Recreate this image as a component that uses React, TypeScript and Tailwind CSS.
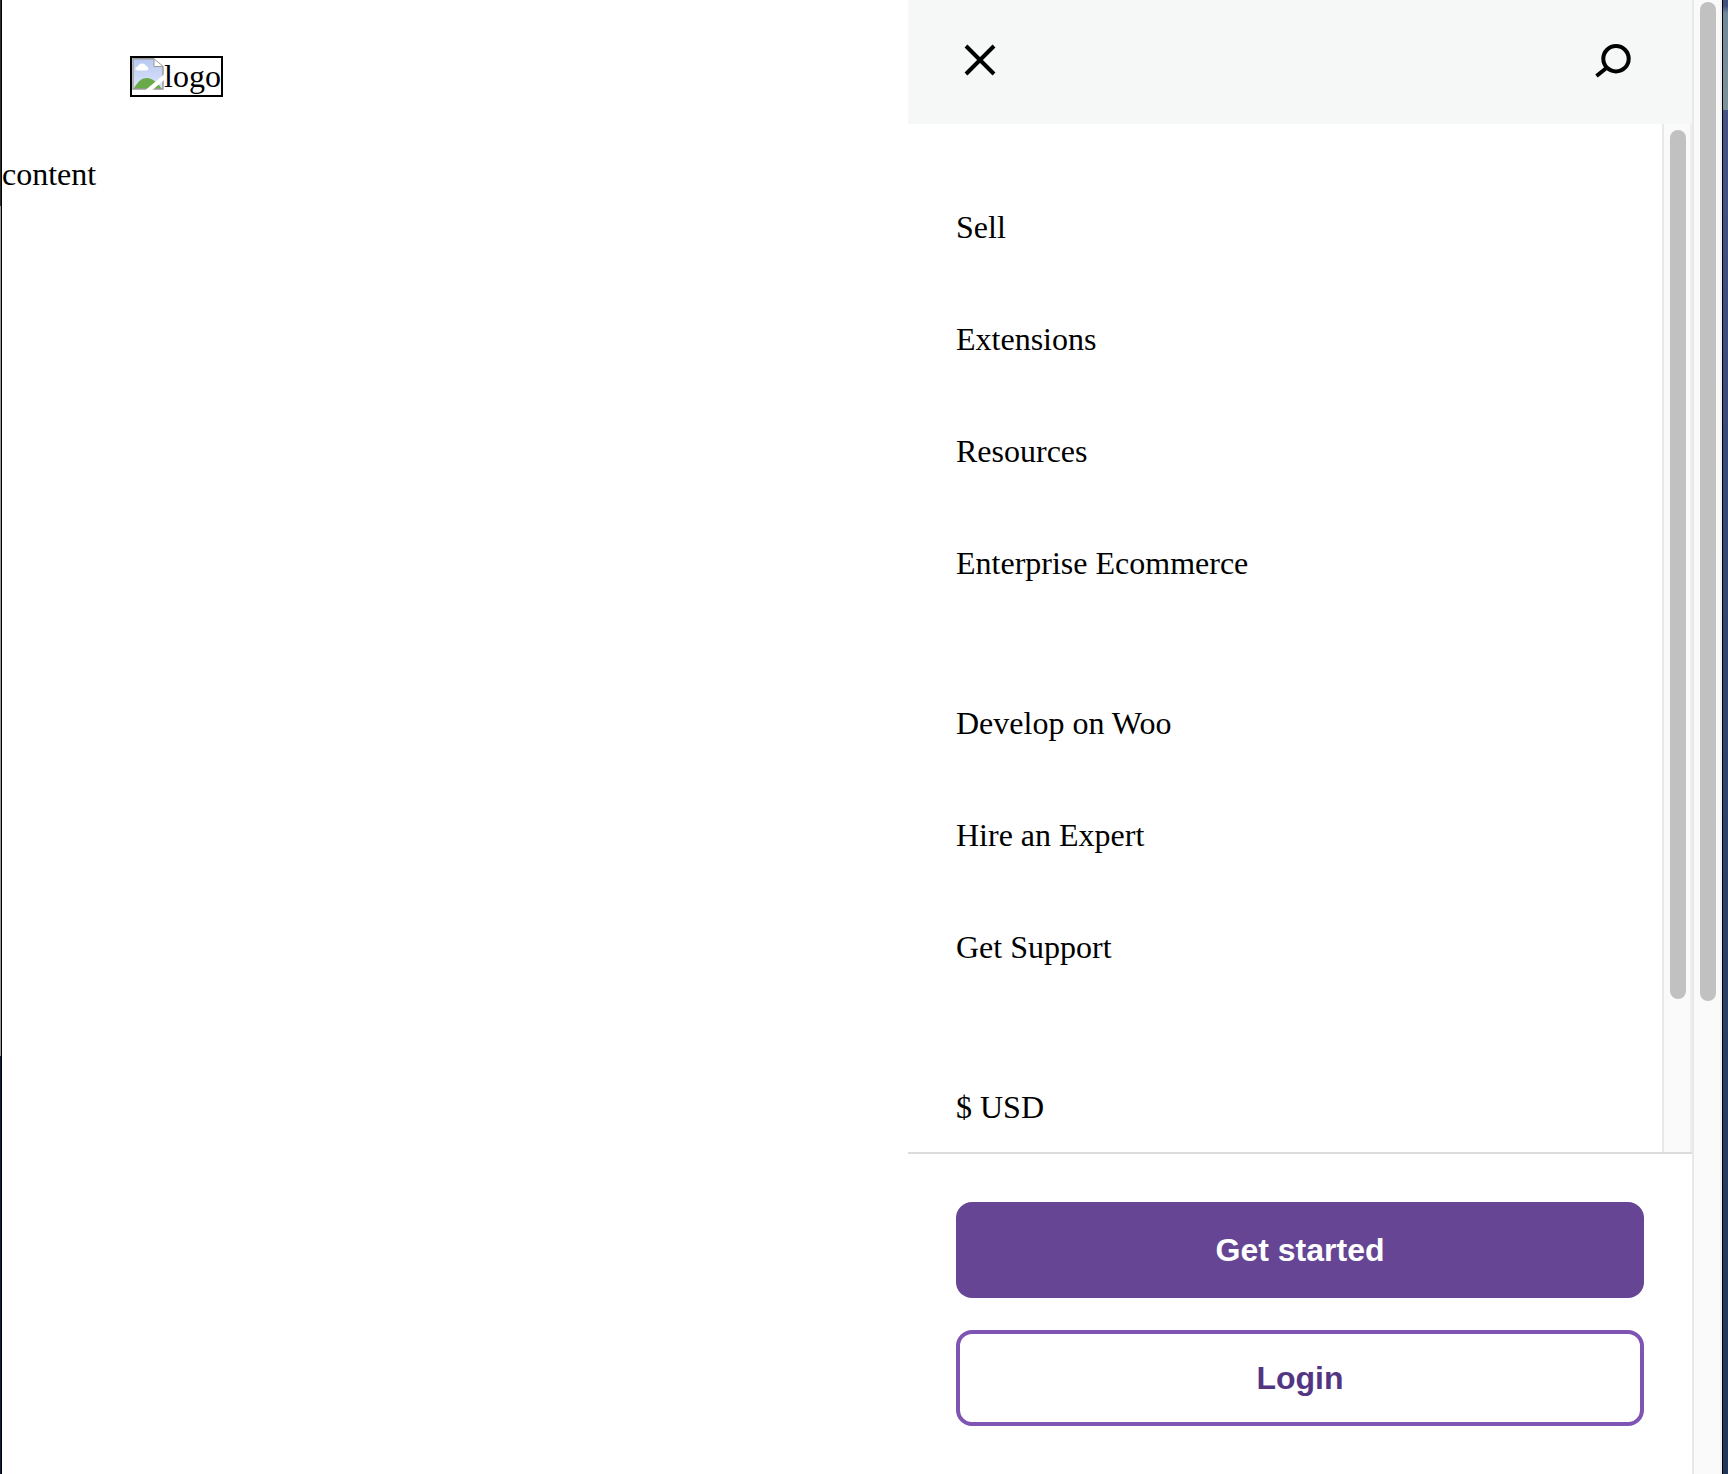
const groups = [
  ["Sell", "Extensions", "Resources", "Enterprise Ecommerce"],
  ["Develop on Woo", "Hire an Expert", "Get Support"],
  ["$ USD"],
];

function BrokenImage() {
  return (
    <svg className="size-8 shrink-0" viewBox="0 0 32 32">
      <defs>
        <linearGradient id="sky" x1="0" y1="0" x2="0" y2="1">
          <stop offset="0" stopColor="#b9c9f1" />
          <stop offset="1" stopColor="#dbe4f9" />
        </linearGradient>
      </defs>
      <path d="M1 1H22L31 9V31H1Z" fill="url(#sky)" />
      <path d="M1.500 31C6 23 10 20 15 20S25 24 30 31Z" fill="#69ab48" />
      <path d="M6 12.500C2.500 12.500 2.500 9 6 8.500C7 4.500 13 4.500 14 8C17 9 17 12.500 14.500 12.500Z" fill="#fff" />
      <path d="M22 0.800H1V31H31V9" fill="none" stroke="#9a9a9a" strokeWidth="1.400" />
      <path d="M22 0H32V9H22Z" fill="#fff" />
      <path d="M22 0.800V8.500H31.300Z" fill="#fff" stroke="#999" />
      <path d="M13.500 32L32 16.500V22L20.500 32Z" fill="#fff" />
    </svg>
  );
}

function CloseIcon() {
  return (
    <svg className="size-12" viewBox="0 0 48 48" fill="none" stroke="#000" strokeWidth="4">
      <path d="M10 10L38 38M38 10L10 38" />
    </svg>
  );
}

function SearchIcon() {
  return (
    <svg className="size-12" viewBox="0 0 48 48" fill="none" stroke="#000" strokeWidth="4">
      <circle cx="28" cy="22.700" r="12.700" />
      <path d="M19 31.500L8.500 40" />
    </svg>
  );
}

export default function App() {
  return (
    <div className="flex h-[1474px] w-[1728px] overflow-hidden bg-white font-['Liberation_Serif',serif] text-[32px] leading-9 text-black">
      <div className="flex w-0.5 shrink-0">
        <div className="flex w-px flex-col">
          <div className="h-[206px] bg-[#2b2c2e]" />
          <div className="h-[850px] bg-[#999999]" />
          <div className="flex-1 bg-[#0a1d42]" />
        </div>
        <div className="w-px bg-black" />
      </div>

      <main className="flex w-[906px] shrink-0 flex-col items-start">
        <header className="pt-14 pl-32">
          <div className="flex h-[41px] w-[93px] border-2 border-black">
            <BrokenImage />
            <span className="leading-9">logo</span>
          </div>
        </header>
        <p className="mt-[59px]">content</p>
      </main>

      <aside className="flex w-[784px] shrink-0 flex-col">
        <div className="flex h-[124px] shrink-0 items-center justify-between bg-[#f6f8f8] pr-14 pb-1 pl-12">
          <button aria-label="Close"><CloseIcon /></button>
          <button aria-label="Search"><SearchIcon /></button>
        </div>
        <div className="flex h-[1028px] shrink-0 overflow-hidden">
          <nav className="flex flex-1 flex-col gap-12 pt-12 pl-12">
            {groups.map((items) => (
              <ul key={items[0]}>
                {items.map((item) => (
                  <li key={item} className="flex h-28 items-center pb-0.5">{item}</li>
                ))}
              </ul>
            ))}
          </nav>
          <div className="w-[30px] border-r-2 border-l-2 border-r-[#eeeeee] border-l-[#e8e8e8] bg-[#fafafa] pt-1.5 pl-1.5">
            <div className="h-[869px] w-4 rounded-full bg-[#c1c1c1]" />
          </div>
        </div>
        <div className="flex flex-1 flex-col gap-8 border-t-2 border-[#dcdcde] px-12 pt-12 font-['Liberation_Sans',sans-serif] font-bold">
          <button className="h-24 rounded-2xl bg-[#654594] text-white">Get started</button>
          <button className="h-24 rounded-2xl border-4 border-[#7f54b3] text-[#533582]">Login</button>
        </div>
      </aside>

      <div className="w-[30px] shrink-0 border-r-2 border-l-2 border-r-[#f0f0f0] border-l-[#e8e8e8] bg-[#fafafa] pt-0.5 pl-1.5">
        <div className="h-[999px] w-4 rounded-full bg-[#c1c1c1]" />
      </div>
      <div className="w-px shrink-0 bg-black" />
      <div className="flex flex-1 flex-col">
        <div className="h-[110px] bg-linear-to-b from-[#414f7c] from-5% via-[#71889a] via-12% to-[#7e9299]" />
        <div className="flex-1 bg-linear-to-b from-[#465286] via-[#304570] via-40% to-[#20375a]" />
      </div>
    </div>
  );
}
